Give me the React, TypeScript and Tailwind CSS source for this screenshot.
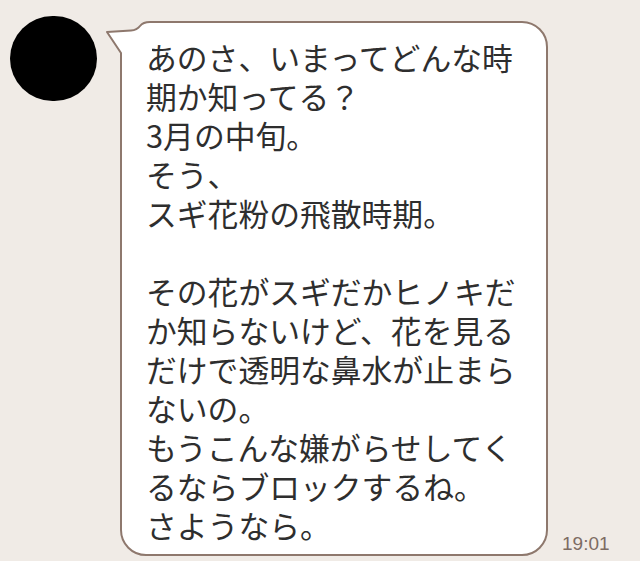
import React from "react";

const lines = [
  "あのさ、いまってどんな時",
  "期か知ってる？",
  "3月の中旬。",
  "そう、",
  "スギ花粉の飛散時期。",
  "",
  "その花がスギだかヒノキだ",
  "か知らないけど、花を見る",
  "だけで透明な鼻水が止まら",
  "ないの。",
  "もうこんな嫌がらせしてく",
  "るならブロックするね。",
  "さようなら。",
];

export default function App() {
  return (
    <div className="w-[640px] h-[561px] bg-[#f0ebe6] flex items-start overflow-hidden">
      <div className="ml-[10px] mt-[16px] w-[87px] h-[85px] rounded-full bg-black blur-[0.6px] shrink-0" />
      <div className="relative ml-[23px] mt-[21px] w-[428px] h-[535px] shrink-0 bg-white border-2 border-[#8e786d] rounded-[26px] rounded-tl-none pl-[24px] pt-[14px]">
        <svg
          className="absolute left-[-18px] top-[-5px]"
          width="48"
          height="42"
          viewBox="0 0 48 42"
        >
          <rect x="0" y="0" width="48" height="42" fill="#f0ebe6" />
          <path
            d="M48 4 L46 4 Q39 4 36 8 Q33 12 27 12.5 L3 14 L17 35 L17 42 L48 42 Z"
            fill="#ffffff"
          />
          <path
            d="M48 4 L46 4 Q39 4 36 8 Q33 12 27 12.5 L3 14 L17 35 L17 42"
            fill="none"
            stroke="#8e786d"
            strokeWidth="2"
            strokeLinejoin="round"
          />
        </svg>
        <div
          className="text-[30.8px] leading-[39px] text-[#2e2e2e]"
          style={{ fontFamily: '"Noto Sans CJK JP", "Noto Sans", sans-serif' }}
        >
          {lines.map((l, i) => (
            <div key={i} className="whitespace-nowrap h-[39px]">
              {l}
            </div>
          ))}
        </div>
      </div>
      <div
        className="self-end ml-[14px] mb-[6px] text-[19px] leading-[22px] text-[#7d6c63]"
        style={{ fontFamily: '"Liberation Sans", Arial, sans-serif' }}
      >
        19:01
      </div>
    </div>
  );
}
